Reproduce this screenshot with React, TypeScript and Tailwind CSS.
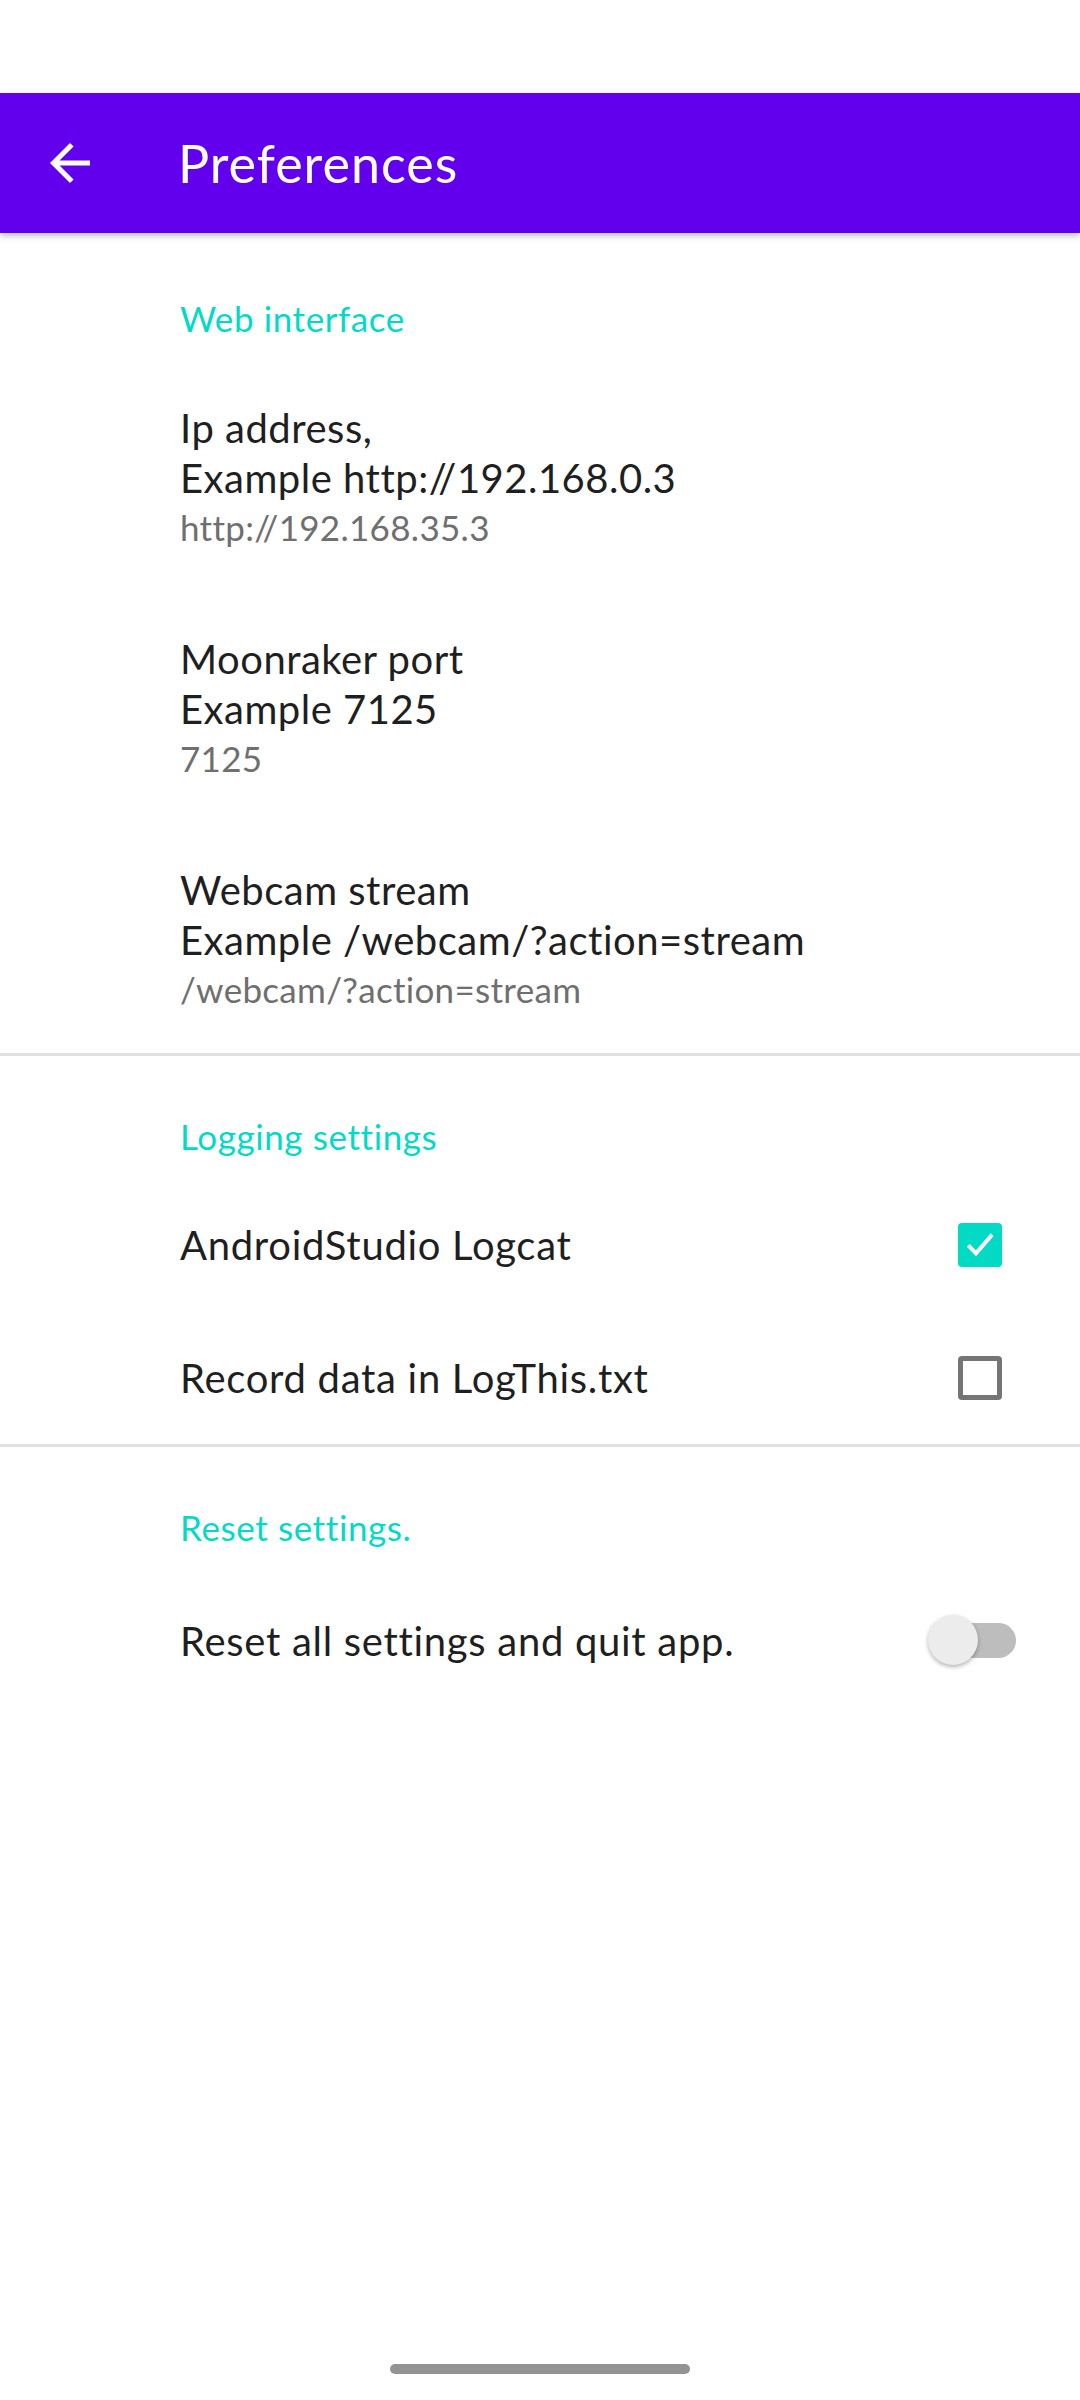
import React from "react";

const font = { fontFamily: "Lato, 'Noto Sans', sans-serif" };

function Category({ label }: { label: string }) {
  return (
    <div className="pl-[180px] pt-[58px] pb-[20px]">
      <div className="text-[35px] leading-[44px] tracking-[0.6px] text-[#03DAC5]">{label}</div>
    </div>
  );
}

function EditItem({ title1, title2, summary }: { title1: string; title2: string; summary: string }) {
  return (
    <div className="pl-[180px] pr-[40px] pt-[43px] pb-[40px]">
      <div className="text-[40px] leading-[50px] tracking-[0.5px] text-[#1f1f1f]">{title1}</div>
      <div className="text-[40px] leading-[50px] tracking-[0.5px] text-[#1f1f1f]">{title2}</div>
      <div className="text-[35px] leading-[48px] tracking-[0.3px] text-[#6f6f6f]">{summary}</div>
    </div>
  );
}

function Checkbox({ checked }: { checked: boolean }) {
  if (checked) {
    return (
      <div className="w-[44px] h-[44px] rounded-[4px] bg-[#03DAC5] flex items-center justify-center">
        <svg width="40" height="40" viewBox="0 0 24 24">
          <path d="M5 12.2l4.6 4.8L19.3 5.8" fill="none" stroke="white" strokeWidth="2.4" />
        </svg>
      </div>
    );
  }
  return <div className="w-[44px] h-[44px] rounded-[4px] border-[5px] border-[#757575]" />;
}

export default function App() {
  return (
    <div className="w-[1080px] h-[2400px] bg-white relative overflow-hidden" style={font}>
      <div className="h-[93px] bg-white" />
      <div className="h-[140px] bg-[#6200EE] flex items-center shadow-[0_3px_6px_rgba(0,0,0,0.25)] relative z-10">
        <div className="w-[60px] h-[60px] ml-[40px] flex items-center justify-center">
          <svg width="60" height="60" viewBox="0 0 24 24">
            <path d="M20 11H7.83l5.59-5.59L12 4l-8 8 8 8 1.41-1.41L7.83 13H20v-2z" fill="white" />
          </svg>
        </div>
        <div className="ml-[78px] text-[52px] leading-[60px] tracking-[1px] text-white">Preferences</div>
      </div>

      <div className="pt-[5px]">
        <Category label="Web interface" />
        <EditItem title1="Ip address," title2="Example http://192.168.0.3" summary="http://192.168.35.3" />
        <EditItem title1="Moonraker port" title2="Example 7125" summary="7125" />
        <EditItem title1="Webcam stream" title2="Example /webcam/?action=stream" summary="/webcam/?action=stream" />
        <div className="h-[3px] bg-[#e0e0e0]" />

        <Category label="Logging settings" />
        <div className="h-[133px] flex items-center pl-[180px] pr-[78px]">
          <div className="flex-1 text-[40px] leading-[50px] tracking-[0.7px] text-[#1f1f1f]">AndroidStudio Logcat</div>
          <Checkbox checked />
        </div>
        <div className="h-[133px] flex items-center pl-[180px] pr-[78px]">
          <div className="flex-1 text-[40px] leading-[50px] tracking-[0.7px] text-[#1f1f1f]">Record data in LogThis.txt</div>
          <Checkbox checked={false} />
        </div>
        <div className="h-[3px] bg-[#e0e0e0]" />

        <Category label="Reset settings." />
        <div className="h-[138px] pt-[5px] flex items-center pl-[180px] pr-[64px]">
          <div className="flex-1 text-[40px] leading-[50px] tracking-[0.7px] text-[#1f1f1f]">Reset all settings and quit app.</div>
          <div className="relative w-[88px] h-[52px] flex items-center">
            <div className="absolute left-[8px] right-0 h-[35px] rounded-full bg-[#bdbdbd]" />
            <div className="absolute left-0 top-0 w-[50px] h-[50px] rounded-full bg-[#ececec] shadow-[0_2px_4px_rgba(0,0,0,0.3)]" />
          </div>
        </div>
      </div>

      <div className="absolute left-[390px] top-[2364px] w-[300px] h-[10px] rounded-full bg-[#939393]" />
    </div>
  );
}
